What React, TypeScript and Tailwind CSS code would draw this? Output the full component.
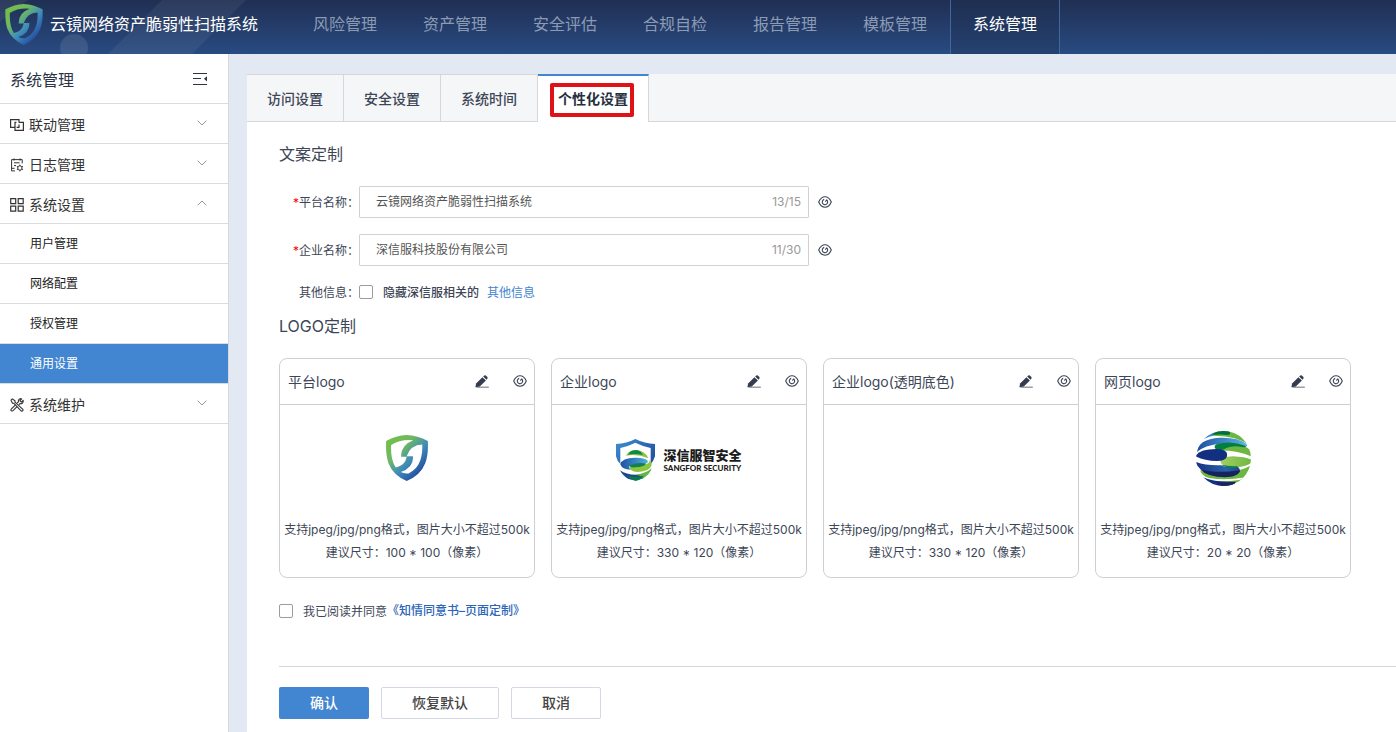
import { ReactNode } from "react";

function ShieldMark({ id, className }: { id: string; className: string }) {
  return (
    <svg viewBox="0 0 126 139" className={className} aria-hidden="true">
      <defs>
        <linearGradient id={id} x1="0.1" y1="0.1" x2="0.85" y2="0.9">
          <stop offset="0" stopColor="#72be4c" />
          <stop offset="0.3" stopColor="#6fb861" />
          <stop offset="0.6" stopColor="#3e8cbb" />
          <stop offset="1" stopColor="#21409a" />
        </linearGradient>
      </defs>
      <path
        fill={`url(#${id})`}
        fillRule="evenodd"
        d="M62 0Q95 2 126 18Q128 60 118 85Q105 120 62 139Q20 120 7 85Q-2 60 0 18Q30 2 62 0ZM82 16Q45 12 15 30Q13 75 29 98Q58 92 62 66L45 66Q44 30 82 16ZM109 29Q74 30 62 64L81 64Q84 98 44 112Q55 118 68 116Q112 95 109 29Z"
      />
    </svg>
  );
}

function CompanyMark() {
  return (
    <svg viewBox="0 0 117 126" className="h-[42px] w-[39px]" aria-hidden="true">
      <defs>
        <linearGradient id="cm-shield" x1="0" y1="0" x2="1" y2="0.6">
          <stop offset="0" stopColor="#3f8fd0" />
          <stop offset="1" stopColor="#2355a4" />
        </linearGradient>
        <linearGradient id="cm-band" x1="0" y1="0" x2="1" y2="0">
          <stop offset="0" stopColor="#1f4fa3" />
          <stop offset="1" stopColor="#4db1e2" />
        </linearGradient>
      </defs>
      <path fill="url(#cm-shield)" d="M58 0Q86 14 117 15V52Q113 66 104 75V27Q80 22 58 11Q36 22 13 27V75Q3 66 0 52V15Q32 14 58 0Z" />
      <path fill="#8cc63f" d="M30 50Q38 33 60 33Q88 35 97 58Q64 44 30 50Z" />
      <path fill="#0b8a4a" d="M36 47Q42 34 60 33Q76 35 80 48Q58 43 36 47Z" />
      <path fill="url(#cm-band)" d="M13 76Q18 55 60 56Q86 56 94 64Q100 72 84 76Q50 76 40 82Q38 88 44 92Q18 92 13 76Z" />
      <path fill="#8cc63f" d="M42 82Q52 74 84 77Q102 74 101 62Q116 80 94 93Q56 106 42 90Z" />
      <path fill="#14804f" d="M42 79Q66 68 90 74Q84 84 58 85Q40 87 42 79Z" />
      <path fill="#1c478f" d="M12 94Q34 110 70 107Q84 108 84 117Q58 128 36 119Q20 110 12 94Z" />
      <path fill="#63b345" d="M107 88Q102 108 78 119Q78 109 56 108Q90 104 107 88Z" />
      <path fill="#0b7a4a" d="M36 110Q60 116 82 110Q82 118 60 126Q42 122 36 110Z" />
    </svg>
  );
}

function GlobeMark() {
  return (
    <svg viewBox="0 0 164 164" className="size-[55px]" aria-hidden="true">
      <defs>
        <clipPath id="gm-clip">
          <circle cx="82" cy="82" r="82" />
        </clipPath>
        <linearGradient id="gm-sky" x1="0" y1="0" x2="1" y2="0">
          <stop offset="0" stopColor="#1c4da0" />
          <stop offset="1" stopColor="#5bb6e8" />
        </linearGradient>
        <linearGradient id="gm-deep" x1="0" y1="0" x2="1" y2="0">
          <stop offset="0" stopColor="#143280" />
          <stop offset="0.7" stopColor="#2a62ac" />
          <stop offset="1" stopColor="#1c4488" />
        </linearGradient>
        <linearGradient id="gm-lime" x1="0" y1="0" x2="1" y2="0">
          <stop offset="0" stopColor="#a3cf62" />
          <stop offset="1" stopColor="#6db63f" />
        </linearGradient>
      </defs>
      <g clipPath="url(#gm-clip)">
        <path fill="#3a84c6" d="M20 25L50 0L60 12Q38 16 20 25Z" />
        <path fill="#6db63f" d="M52 12L62 -4H120L164 44Q120 14 56 14Z" />
        <path fill="#00703c" d="M50 12Q52 2 64 -2H96Q108 8 96 12Q70 9 50 12Z" />
        <path fill="#6db63f" d="M56 44Q70 30 110 33Q148 40 170 66V78Q130 58 75 58Q52 56 56 44Z" />
        <path fill="url(#gm-sky)" d="M0 64Q8 24 70 20Q126 18 150 38Q156 48 146 47Q116 33 75 38Q26 42 0 64Z" />
        <path fill="#00803f" d="M60 40Q104 26 149 45Q146 50 138 48Q112 42 92 50Q84 58 64 56Q50 50 60 40Z" />
        <path fill="url(#gm-lime)" d="M73 92Q76 76 110 75Q152 77 170 88Q162 104 120 109Q76 110 73 92Z" />
        <path fill="#132f80" d="M-2 75Q10 54 60 54Q93 54 93 71Q93 84 75 89Q30 92 -2 75Z" />
        <path fill="#6db63f" d="M170 98V130L110 160Q20 146 12 118Q50 136 90 134Q125 132 130 116Q152 112 170 98Z" />
        <path fill="url(#gm-deep)" d="M-2 92Q30 104 76 102Q84 110 122 106Q132 110 131 122Q114 137 70 137Q14 130 -2 92Z" />
        <path fill="#17245c" d="M12 114Q60 128 131 117Q128 137 85 138Q32 136 12 114Z" />
        <path fill="#0a8050" d="M76 101Q96 106 124 105L120 110Q86 112 76 101Z" />
        <path fill="#fff" d="M14 132Q60 152 150 138L146 143Q60 158 20 140Z" />
        <path fill="#132f80" d="M20 138Q60 154 118 151Q116 162 90 168H50Z" />
        <path fill="#1a255a" d="M62 153Q90 155 118 151Q112 166 85 166Q64 162 62 153Z" />
      </g>
    </svg>
  );
}

function EyeIcon() {
  return (
    <svg viewBox="0 0 14 12" className="h-3 w-3.5" fill="none" stroke="#3d4656" strokeWidth="1.1" aria-hidden="true">
      <path d="M0.7 6Q3 0.8 7 0.8Q11 0.8 13.3 6Q11 11.2 7 11.2Q3 11.2 0.7 6Z" />
      <path d="M8.8 4A2.7 2.7 0 1 1 6.2 3.4M7.4 5.6L8.9 3.7" />
    </svg>
  );
}

function PencilIcon() {
  return (
    <svg viewBox="0 0 14 13" className="h-[13px] w-3.5" fill="#343d4d" aria-hidden="true">
      <path d="M0.4 12.2L1.1 8.6L7.4 2.3L10.9 5.6L4.8 11.4Z" />
      <path d="M8.2 1.6L9.3 0.6Q10.1 0 10.8 0.6L12.4 2.1Q13 2.9 12.4 3.6L11.5 4.7Z" />
      <path d="M4 11.7H13.8V12.6H0.4Z" />
    </svg>
  );
}

function Chevron({ up }: { up?: boolean }) {
  return (
    <svg viewBox="0 0 10 6" className="h-1.5 w-2.5" fill="none" stroke="#8c8c8c" strokeWidth="0.9" aria-hidden="true">
      <path d={up ? "M0.7 5.3L5 1L9.3 5.3" : "M0.7 0.7L5 5L9.3 0.7"} />
    </svg>
  );
}

const linkIcon = (
  <svg viewBox="0 0 14 14" className="size-3.5" fill="none" stroke="#333" strokeWidth="1.2" aria-hidden="true">
    <path d="M4.6 9.4H0.6V1.6H9V4.4M8.9 4.4H13.4V12.4H5V4.4H6.4M6.6 9.4H9V6.4" />
  </svg>
);
const logIcon = (
  <svg viewBox="0 0 14 14" className="size-3.5" fill="none" stroke="#333" aria-hidden="true">
    <path d="M5 12.9H1.6V1.6H12.2V5.4M4 0.4V2.6M10 0.4V2.6M4 4.8H9.6M4 7.6H6M1.6 10.3H4.6" />
    <circle cx="9.9" cy="10" r="2.2" />
    <path d="M9.9 6.6V7.8M9.9 12.2V13.4M6.9 8.3L8 8.9M11.8 11.1L12.9 11.7M6.9 11.7L8 11.1M11.8 8.9L12.9 8.3" />
  </svg>
);
const gridIcon = (
  <svg viewBox="0 0 14 14" className="size-3.5" fill="none" stroke="#333" strokeWidth="1.2" aria-hidden="true">
    <path d="M0.7 0.7H5.7V5.7H0.7ZM8.2 0.7H13.2V5.7H8.2ZM0.7 8.2H5.7V13.2H0.7ZM8.2 8.2H13.2V13.2H8.2Z" />
  </svg>
);
const toolsIcon = (
  <svg viewBox="0 0 14 14" className="size-3.5" fill="none" stroke="#333" strokeWidth="1.1" strokeLinejoin="round" aria-hidden="true">
    <path d="M1 2.2L2.3 0.9L5 2.8V4.2L12.9 11.4Q13.3 12.6 12.3 13.1Q11.4 13.4 10.8 12.6L3.7 5.2H2.5Z" />
    <path d="M5.2 7.2L1.2 11.2Q0.6 12.2 1.4 12.8Q2.2 13.3 3 12.6L7 8.7M7.2 5L8.4 3.8Q8 1.6 9.6 0.9Q10.8 0.4 11.7 0.9L9.9 2.7L11.3 4.1L13.1 2.3Q13.6 4.3 12.3 5.3Q11.2 6 10 5.6L8.9 6.8" />
  </svg>
);

const NAV = ["风险管理", "资产管理", "安全评估", "合规自检", "报告管理", "模板管理", "系统管理"];
const TABS = ["访问设置", "安全设置", "系统时间"];
const SUBMENU = ["用户管理", "网络配置", "授权管理", "通用设置"];

function MenuGroup({ icon, label, open }: { icon: ReactNode; label: string; open?: boolean }) {
  return (
    <button
      type="button"
      aria-expanded={!!open}
      className="flex h-10 w-full items-center border-b border-[#d9dcdc] pr-[21px] pl-2.5 text-sm text-[#333]"
    >
      <span className="pt-0.5">{icon}</span>
      <span className="ml-[5px] pt-0.5">{label}</span>
      <span className="ml-auto pb-0.5">
        <Chevron up={open} />
      </span>
    </button>
  );
}

function TextRow({ id, label, value, count }: { id: string; label: string; value: string; count: string }) {
  return (
    <div className="flex items-center">
      <label htmlFor={id} className="w-20 pt-0.5 text-right whitespace-nowrap">
        <span className="text-[#f00]">*</span>
        {label}：
      </label>
      <div className="flex h-8 w-[450px] items-center rounded-[1px] border border-[#d2d2d4] pr-[7px] pl-4">
        <input id={id} defaultValue={value} className="min-w-0 flex-1 text-[#555] outline-none" />
        <span className="text-[#999]">{count}</span>
      </div>
      <button type="button" aria-label={`预览${label}`} className="ml-[9px]">
        <EyeIcon />
      </button>
    </div>
  );
}

function LogoCard({ title, size, children }: { title: string; size: string; children?: ReactNode }) {
  return (
    <section className="flex h-[220px] w-64 flex-col rounded-lg border border-[#cfcfd1]">
      <header className="flex h-[46px] items-center border-b border-[#cfcfd1] pr-[7px] pl-2">
        <h3 className="text-sm">{title}</h3>
        <button type="button" aria-label={`编辑${title}`} className="ml-auto">
          <PencilIcon />
        </button>
        <button type="button" aria-label={`预览${title}`} className="ml-6 pb-0.5">
          <EyeIcon />
        </button>
      </header>
      <div className="flex h-[106px] items-center justify-center">{children}</div>
      <p className="pt-[7px] text-center leading-[23px] whitespace-nowrap">
        支持jpeg/jpg/png格式，图片大小不超过500k
        <br />
        建议尺寸：{size}（像素）
      </p>
    </section>
  );
}

export default function App() {
  const box = "size-3.5 appearance-none rounded-[2px] border border-[#9c9c9e] bg-white checked:bg-[#4285d0]";
  return (
    <div className="flex min-h-screen flex-col bg-[#e2e9f3] font-[Inter,'Noto_Sans_CJK_SC',sans-serif] text-xs text-[#3d4656]">
      <header className="relative flex h-[54px] items-center overflow-hidden bg-linear-to-b from-[#202f53] to-[#284b82]">
        <svg className="absolute top-0 left-0 h-[54px] w-[310px]" viewBox="0 0 310 54" fill="#fff" aria-hidden="true">
          <path d="M0 0H28L0 22Z" opacity="0.06" />
          <path d="M162 0H246L192 54H108Z" opacity="0.06" />
          <circle cx="74" cy="48" r="14" opacity="0.1" />
        </svg>
        <div className="relative flex w-[290px] shrink-0 items-center pb-1.5 pl-[5px]">
          <ShieldMark id="brand-shield" className="h-[41px] w-[38px]" />
          <h1 className="ml-[7px] text-base whitespace-nowrap text-white">云镜网络资产脆弱性扫描系统</h1>
        </div>
        <nav className="relative flex h-full">
          {NAV.map((item) => (
            <a
              key={item}
              href="#"
              className={
                item === "系统管理"
                  ? "flex w-[110px] items-center justify-center border-x border-[#41689c] bg-[#1f2f4d]/30 pb-1.5 text-base text-white"
                  : "flex w-[110px] items-center justify-center pb-1.5 text-base text-[#8c9bb4]"
              }
            >
              {item}
            </a>
          ))}
        </nav>
      </header>

      <div className="flex flex-1">
        <aside className="w-[229px] shrink-0 border-r border-[#d5d9dd] bg-white">
          <div className="flex h-[50px] items-center justify-between border-b border-[#d9dcdc] pr-5 pl-2.5">
            <h2 className="pt-0.5 text-base text-[#2b3345]">系统管理</h2>
            <button type="button" aria-label="收起菜单">
              <svg viewBox="0 0 16 12" className="h-3 w-4" aria-hidden="true">
                <path d="M1 0.5H15M1 5.5H9M1 11.5H15" stroke="#2b3345" fill="none" />
                <path d="M15 3.2V8.4L12 5.8Z" fill="#2b3345" />
              </svg>
            </button>
          </div>
          <MenuGroup icon={linkIcon} label="联动管理" />
          <MenuGroup icon={logIcon} label="日志管理" />
          <MenuGroup icon={gridIcon} label="系统设置" open />
          {SUBMENU.map((item) => (
            <a
              key={item}
              href="#"
              className={
                item === "通用设置"
                  ? "flex h-10 items-center border-b border-[#d9dcdc] bg-[#4285d0] pl-[30px] text-white"
                  : "flex h-10 items-center border-b border-[#d9dcdc] pl-[30px] text-[#222]"
              }
            >
              {item}
            </a>
          ))}
          <MenuGroup icon={toolsIcon} label="系统维护" />
        </aside>

        <main className="mt-5 ml-[18px] min-w-0 flex-1 bg-white">
          <div role="tablist" className="flex h-12 border-b border-[#d5d7da] bg-[#f5f6f8] text-sm font-medium">
            {TABS.map((tab) => (
              <button key={tab} type="button" role="tab" aria-selected={false} className="w-[97px] border-t border-r border-[#d5d7da] pt-0.5">
                {tab}
              </button>
            ))}
            <button
              type="button"
              role="tab"
              aria-selected
              className="-mb-px w-[111px] border-t-2 border-r border-t-[#4285d0] border-r-[#d5d7da] bg-white font-semibold text-[#262f40]"
            >
              <span className="relative">
                个性化设置
                <span className="absolute -top-[7px] -right-1.5 -bottom-2.5 -left-2 rounded-[2px] border-4 border-[#df1218]" />
              </span>
            </button>
          </div>

          <div className="pl-8">
            <h2 className="pt-5 text-base">文案定制</h2>
            <div className="flex flex-col gap-4 pt-5">
              <TextRow id="platform" label="平台名称" value="云镜网络资产脆弱性扫描系统" count="13/15" />
              <TextRow id="company" label="企业名称" value="深信服科技股份有限公司" count="11/30" />
            </div>
            <div className="flex h-[52px] items-center">
              <span className="w-20 pt-0.5 text-right whitespace-nowrap">其他信息：</span>
              <input id="hide-info" type="checkbox" className={box} />
              <label htmlFor="hide-info" className="ml-2.5 pt-0.5 font-medium">
                隐藏深信服相关的
              </label>
              <a href="#" className="ml-2 pt-0.5 text-[#4285d0]">
                其他信息
              </a>
            </div>

            <h2 className="-mt-1 text-base">LOGO定制</h2>
            <div className="flex flex-wrap gap-4 pt-5">
              <LogoCard title="平台logo" size="100 * 100">
                <ShieldMark id="card-shield" className="h-[46px] w-[42px]" />
              </LogoCard>
              <LogoCard title="企业logo" size="330 * 120">
                <div className="flex items-center gap-2 pt-1">
                  <CompanyMark />
                  <div className="text-[#1c1c1c]">
                    <div className="text-[13px] leading-4 font-black">深信服智安全</div>
                    <div className="font-[Lato,sans-serif] text-[8px] leading-[10px] font-black whitespace-nowrap">SANGFOR SECURITY</div>
                  </div>
                </div>
              </LogoCard>
              <LogoCard title="企业logo(透明底色)" size="330 * 120" />
              <LogoCard title="网页logo" size="20 * 20">
                <GlobeMark />
              </LogoCard>
            </div>

            <div className="flex items-center pt-6">
              <input id="agree" type="checkbox" className={box} />
              <label htmlFor="agree" className="ml-2.5 pt-0.5">
                我已阅读并同意
              </label>
              <a href="#" className="font-medium text-[#2b65b8]">
                《知情同意书–页面定制》
              </a>
            </div>

            <div className="mt-[46px] flex gap-3 border-t border-[#d5d7da] py-5 text-sm font-medium">
              <button type="button" className="h-8 w-[90px] rounded-[2px] bg-[#4285d0] text-white">
                确认
              </button>
              <button type="button" className="h-8 w-[118px] rounded-[2px] border border-[#d3d8e2] text-[#444]">
                恢复默认
              </button>
              <button type="button" className="h-8 w-[90px] rounded-[2px] border border-[#d3d8e2] text-[#444]">
                取消
              </button>
            </div>
          </div>
        </main>
      </div>
    </div>
  );
}
